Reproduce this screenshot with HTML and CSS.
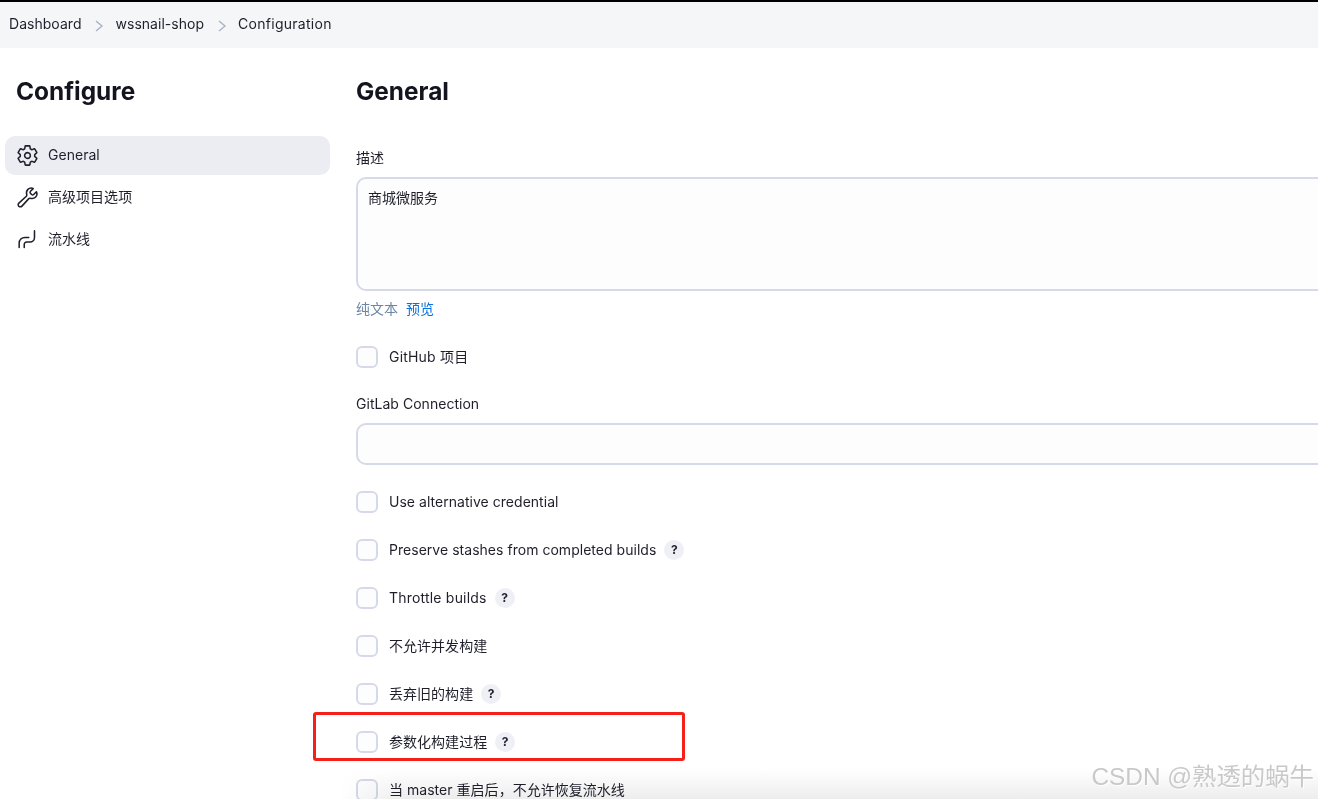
FILE: index.html
```html
<!DOCTYPE html>
<html lang="zh">
<head>
<meta charset="utf-8">
<title>Configuration</title>
<link rel="stylesheet" href="styles.css">
</head>
<body>
<div class="page">
  <nav class="crumbs">
    <a>Dashboard</a>
    <svg class="chev" viewBox="0 0 10 14"><path d="M2 2l6 5-6 5"/></svg>
    <a>wssnail-shop</a>
    <svg class="chev" viewBox="0 0 10 14"><path d="M2 2l6 5-6 5"/></svg>
    <a class="wide-more">Configuration</a>
  </nav>
  <div class="layout">
    <aside class="side">
      <h1 class="side-title">Configure</h1>
      <ul class="menu">
        <li class="menu-item active">
          <svg class="ico" viewBox="0 0 512 512"><path d="M262.29 192.31a64 64 0 1057.4 57.4 64.13 64.13 0 00-57.4-57.4zM416.39 256a154.34 154.34 0 01-1.53 20.79l45.21 35.46a10.81 10.81 0 012.45 13.75l-42.77 74a10.81 10.81 0 01-13.14 4.59l-44.9-18.08a16.11 16.11 0 00-15.17 1.75A164.48 164.48 0 01325 400.8a15.94 15.94 0 00-8.82 12.14l-6.73 47.89a11.08 11.08 0 01-10.68 9.17h-85.54a11.11 11.11 0 01-10.69-8.87l-6.72-47.82a16.07 16.07 0 00-9-12.22 155.3 155.3 0 01-21.46-12.57 16 16 0 00-15.11-1.71l-44.89 18.07a10.81 10.81 0 01-13.14-4.58l-42.77-74a10.8 10.8 0 012.45-13.75l38.21-30a16.05 16.05 0 006-14.08c-.36-4.17-.58-8.33-.58-12.5s.21-8.27.58-12.35a16 16 0 00-6.07-13.94l-38.19-30A10.81 10.81 0 0149.48 186l42.77-74a10.81 10.81 0 0113.14-4.59l44.9 18.08a16.11 16.11 0 0015.17-1.75A164.48 164.48 0 01187 111.2a15.94 15.94 0 008.82-12.14l6.73-47.89A11.08 11.08 0 01213.23 42h85.54a11.11 11.11 0 0110.69 8.87l6.72 47.82a16.07 16.07 0 009 12.22 155.3 155.3 0 0121.46 12.57 16 16 0 0015.11 1.71l44.89-18.07a10.81 10.81 0 0113.14 4.58l42.77 74a10.8 10.8 0 01-2.45 13.75l-38.21 30a16.05 16.05 0 00-6.05 14.08c.33 4.14.55 8.3.55 12.47z"/></svg>
          <span class="menu-text">General</span>
        </li>
        <li class="menu-item">
          <svg class="ico" viewBox="0 0 512 512"><path d="M393.87 190a32.1 32.1 0 01-45.25 0l-26.57-26.57a32.09 32.09 0 010-45.26L382.19 58a1 1 0 00-.3-1.64c-38.82-16.64-89.15-8.16-121.11 23.57-30.58 30.35-32.32 76-21.12 115.84a31.93 31.93 0 01-9.06 32.08L64 380a48.17 48.17 0 1068 68l153.86-167a31.93 31.93 0 0131.6-9.13c39.54 10.59 84.54 8.6 114.72-21.19 32.49-32 39.5-88.56 23.75-120.93a1 1 0 00-1.6-.26z"/></svg>
          <span class="menu-text">高级项目选项</span>
        </li>
        <li class="menu-item">
          <svg class="ico thin" viewBox="0 0 24 24"><path d="M3.300 20.300v-4.500a6 6 0 0 1 6-6h4M19.300 3v7a4.700 4.700 0 0 1-4.700 4.700h-3.500a2.500 2.500 0 0 0-2.500 2.500v3.100"/></svg>
          <span class="menu-text">流水线</span>
        </li>
      </ul>
    </aside>
    <main class="main">
      <h1 class="main-title">General</h1>
      <div class="field-label first">描述</div>
      <div class="box textarea">商城微服务</div>
      <div class="preview-row"><span class="plain">纯文本</span><a class="preview">预览</a></div>
      <div class="check-row solo"><span class="check"></span><span class="wide">GitHub 项目</span></div>
      <div class="field-label second">GitLab Connection</div>
      <div class="box input"></div>
      <div class="checks">
        <div class="check-row"><span class="check"></span><span>Use alternative credential</span></div>
        <div class="check-row"><span class="check"></span><span>Preserve stashes from completed builds</span><span class="help">?</span></div>
        <div class="check-row"><span class="check"></span><span class="wide">Throttle builds</span><span class="help">?</span></div>
        <div class="check-row"><span class="check"></span><span>不允许并发构建</span></div>
        <div class="check-row"><span class="check"></span><span>丢弃旧的构建</span><span class="help">?</span></div>
        <div class="check-row"><span class="check"></span><span>参数化构建过程</span><span class="help">?</span></div>
        <div class="check-row"><span class="check"></span><span>当 master 重启后，不允许恢复流水线</span></div>
      </div>
    </main>
  </div>
  <div class="fade"></div>
  <div class="mark"></div>
  <div class="watermark">CSDN @熟透的蜗牛</div>
</div>
</body>
</html>
```
FILE: styles.css
```css
* { box-sizing: border-box; }
html, body { margin: 0; padding: 0; height: 100%; overflow: hidden; background: #fff; }
body {
  font-family: Inter, "Noto Sans CJK SC", "Noto Sans", sans-serif;
  font-size: 14px;
  line-height: 20px;
  letter-spacing: 0.03px;
  color: #1f1f2b;
}
.page { position: relative; width: 1318px; height: 799px; overflow: hidden; }
.wide { letter-spacing: 0.2px; }
.wide-more { letter-spacing: 0.27px; }

.crumbs {
  display: flex;
  align-items: center;
  height: 48px;
  padding: 0 0 2px 9px;
  background: #f5f6f8;
  border-top: 2px solid #000;
}
.chev { width: 10px; height: 14px; margin: 3px 11px 0 13px; fill: none; stroke: #a9b3c6; stroke-width: 1.4; }

.layout { display: flex; }
.side { flex: 0 0 356px; padding-left: 5px; }
.side-title {
  margin: 28px 0 0 11px;
  font-size: 24.4px;
  line-height: 30px;
  font-weight: 700;
  letter-spacing: 0;
  color: #14141f;
}
.menu { list-style: none; margin: 30px 0 0; padding: 0; width: 325px; display: flex; flex-direction: column; gap: 3px; }
.menu-item {
  display: flex;
  align-items: center;
  height: 39px;
  padding-left: 11px;
  border-radius: 10px;
  gap: 9px;
}
.menu-item.active { background: #ecedf3; }
.menu-text { margin-top: -2px; }
.ico { width: 23px; height: 23px; flex: none; fill: none; stroke: #1f1f2b; stroke-width: 34; stroke-linecap: round; stroke-linejoin: round; }
.ico.thin { stroke-width: 1.6; }

.main { flex: 0 0 1000px; }
.main-title {
  margin: 28px 0 0;
  font-size: 24.4px;
  line-height: 30px;
  font-weight: 700;
  letter-spacing: 0;
  color: #14141f;
}
.field-label.first { margin-top: 42px; }
.field-label.second { margin-top: 13px; }
.box {
  width: 1000px;
  margin-top: 9px;
  background: #fdfdfe;
  border: 2px solid #d6dae8;
  border-radius: 10px;
}
.textarea { height: 114px; padding: 9px 10px; }
.input { height: 42px; }
.preview-row { display: flex; gap: 8px; margin-top: 8px; }
.plain { color: #6b87a6; }
.preview { color: #0b6fde; }

.check-row { display: flex; align-items: center; height: 48px; gap: 11px; }
.check-row.solo { margin-top: 14px; }
.checks { margin-top: 13px; }
.check {
  width: 22px;
  height: 22px;
  flex: none;
  background: #fdfdfe;
  border: 2px solid #d6dae8;
  border-radius: 6px;
}
.help {
  width: 20px;
  height: 20px;
  margin-left: -3px;
  flex: none;
  border-radius: 50%;
  background: #eef0f5;
  color: #23232f;
  font-size: 12px;
  line-height: 20px;
  font-weight: 700;
  text-align: center;
}

.fade {
  position: absolute;
  left: 340px;
  right: 0;
  bottom: 0;
  height: 30px;
  background: linear-gradient(to bottom, #fff, #ededed);
  mix-blend-mode: multiply;
  -webkit-mask-image: linear-gradient(to right, transparent, #000 60px);
  mask-image: linear-gradient(to right, transparent, #000 60px);
}
.mark {
  position: absolute;
  left: 313px;
  top: 712px;
  width: 372px;
  height: 49px;
  border: 3px solid #f5201a;
  border-radius: 3px;
}
.watermark {
  position: absolute;
  right: 4px;
  top: 762px;
  font-family: "Liberation Sans", "Noto Sans CJK SC", sans-serif;
  font-size: 24.4px;
  line-height: 30px;
  letter-spacing: 0;
  color: #c9c9c9;
  text-shadow: 1px 1px 1px #fff;
}
```
